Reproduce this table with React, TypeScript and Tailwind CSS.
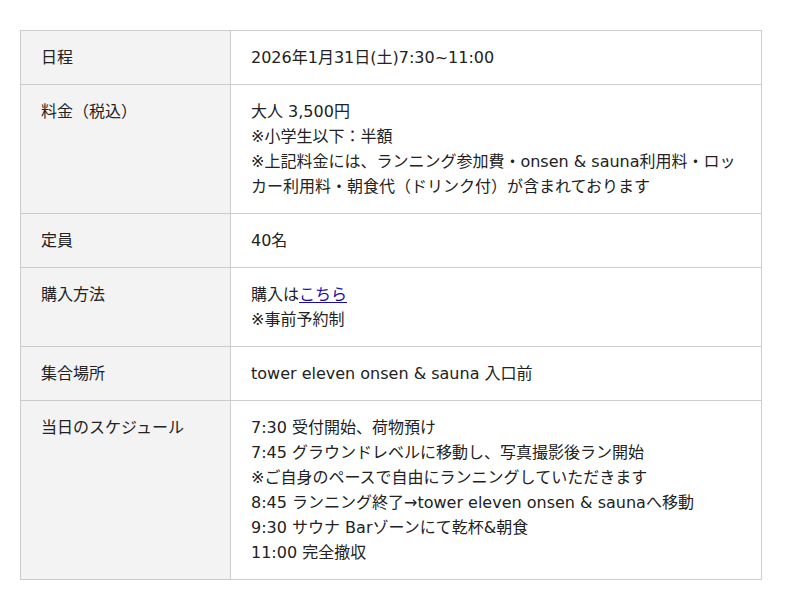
import React from "react";

const rows: { label: string; content: React.ReactNode }[] = [
  { label: "日程", content: <p>2026年1月31日(土)7:30~11:00</p> },
  {
    label: "料金（税込）",
    content: (
      <>
        <p>大人 3,500円</p>
        <p>※小学生以下：半額</p>
        <p>※上記料金には、ランニング参加費・onsen &amp; sauna利用料・ロッカー利用料・朝食代（ドリンク付）が含まれております</p>
      </>
    ),
  },
  { label: "定員", content: <p>40名</p> },
  {
    label: "購入方法",
    content: (
      <>
        <p>
          購入は<a href="#" className="text-[#1a0dab] underline underline-offset-2">こちら</a>
        </p>
        <p>※事前予約制</p>
      </>
    ),
  },
  { label: "集合場所", content: <p>tower eleven onsen &amp; sauna 入口前</p> },
  {
    label: "当日のスケジュール",
    content: (
      <>
        <p>7:30 受付開始、荷物預け</p>
        <p>7:45 グラウンドレベルに移動し、写真撮影後ラン開始</p>
        <p>※ご自身のペースで自由にランニングしていただきます</p>
        <p>8:45 ランニング終了→tower eleven onsen &amp; saunaへ移動</p>
        <p>9:30 サウナ Barゾーンにて乾杯&amp;朝食</p>
        <p>11:00 完全撤収</p>
      </>
    ),
  },
];

export default function App() {
  return (
    <div
      className="w-[800px] h-[610px] bg-white pt-[30px] px-[20px] text-[16px] leading-[25px] text-[#222]"
      style={{ fontFamily: '"DejaVu Sans", "Noto Sans CJK JP", sans-serif' }}
    >
      <table className="w-[742px] border-collapse">
        <tbody>
          {rows.map((r) => (
            <tr key={r.label}>
              <th className="w-[210px] bg-[#f3f3f3] border border-[#cccccc] px-[20px] py-[14px] text-left align-top font-normal">
                {r.label}
              </th>
              <td className="bg-white border border-[#cccccc] px-[20px] py-[14px] text-left align-top">
                {r.content}
              </td>
            </tr>
          ))}
        </tbody>
      </table>
    </div>
  );
}
